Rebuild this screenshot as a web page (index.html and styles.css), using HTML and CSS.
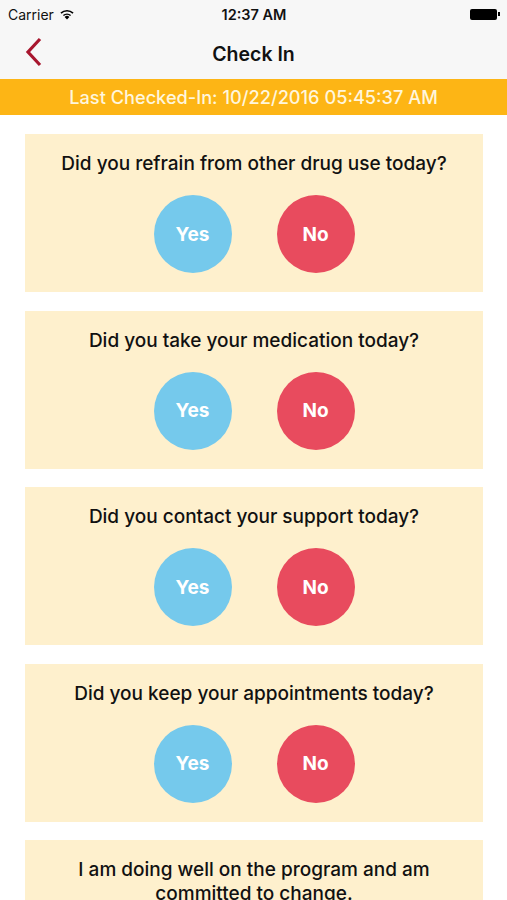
FILE: index.html
```html
<!DOCTYPE html>
<html lang="en">
<head>
  <meta charset="UTF-8">
  <title>Check In</title>
  <link rel="stylesheet" href="styles.css">
</head>
<body>

<div class="status-bar">
  <div class="carrier">Carrier
    <svg class="wifi" width="16" height="12" viewBox="0 0 16 12">
      <path d="M8 11.5 L5.6 8.9 A3.5 3.5 0 0 1 10.4 8.9 Z" fill="#000"/>
      <path d="M3.9 7.1 A6 6 0 0 1 12.1 7.1 L11.1 8.1 A4.6 4.6 0 0 0 4.9 8.1 Z" fill="#000"/>
      <path d="M1.4 4.6 A9.5 9.5 0 0 1 14.6 4.6 L13.5 5.7 A8 8 0 0 0 2.5 5.7 Z" fill="#000"/>
    </svg>
  </div>
  <div class="clock">12:37 AM</div>
  <div class="battery"><span class="battery-body"></span><span class="battery-tip"></span></div>
</div>

<header class="nav-bar">
  <svg class="back" width="18" height="30" viewBox="0 0 18 30">
    <path d="M15 2 L3 15 L15 28" fill="none" stroke="#a8162e" stroke-width="3.2"/>
  </svg>
  <h1>Check In</h1>
</header>

<div class="banner">Last Checked-In: 10/22/2016 05:45:37 AM</div>

<main class="cards">
  <section class="card">
    <p class="question">Did you refrain from other drug use today?</p>
    <div class="answers">
      <button class="answer yes">Yes</button>
      <button class="answer no">No</button>
    </div>
  </section>
  <section class="card">
    <p class="question">Did you take your medication today?</p>
    <div class="answers">
      <button class="answer yes">Yes</button>
      <button class="answer no">No</button>
    </div>
  </section>
  <section class="card">
    <p class="question">Did you contact your support today?</p>
    <div class="answers">
      <button class="answer yes">Yes</button>
      <button class="answer no">No</button>
    </div>
  </section>
  <section class="card">
    <p class="question">Did you keep your appointments today?</p>
    <div class="answers">
      <button class="answer yes">Yes</button>
      <button class="answer no">No</button>
    </div>
  </section>
  <section class="card">
    <p class="question">I am doing well on the program and am<br>committed to change.</p>
    <div class="answers">
      <button class="answer yes">Yes</button>
      <button class="answer no">No</button>
    </div>
  </section>
</main>

</body>
</html>
```

FILE: styles.css
```css
* {
  box-sizing: border-box;
}
body {
  margin: 0;
  background-color: #ffffff;
  font-family: 'Inter', 'Roboto', sans-serif;
  color: #111;
  width: 507px;
  height: 900px;
  overflow: hidden;
}
.status-bar {
  height: 28px;
  background-color: #f7f7f7;
  display: flex;
  align-items: center;
  justify-content: space-between;
  padding: 0 7px 0 8px;
  font-size: 14px;
}
.carrier {
  flex: 1;
  display: flex;
  align-items: center;
  gap: 5px;
}
.clock {
  font-weight: 600;
  font-size: 14.5px;
}
.battery {
  flex: 1;
  display: flex;
  justify-content: flex-end;
  align-items: center;
}
.battery-body {
  width: 27px;
  height: 11px;
  background-color: #000;
  border-radius: 2px;
}
.battery-tip {
  width: 2px;
  height: 4px;
  background-color: #000;
  margin-left: 1px;
}
.nav-bar {
  height: 51px;
  background-color: #f7f7f7;
  display: flex;
  align-items: center;
  justify-content: center;
  position: relative;
}
.nav-bar h1 {
  margin: 0;
  font-size: 19.5px;
  font-weight: 600;
}
.back {
  position: absolute;
  left: 25px;
  top: 9px;
}
.banner {
  height: 36px;
  background-color: #fdb515;
  color: #fff6dc;
  font-size: 18.2px;
  font-weight: 500;
  display: flex;
  align-items: center;
  justify-content: center;
}
.cards {
  padding: 19px 24px 0 25px;
  display: flex;
  flex-direction: column;
  gap: 18.5px;
}
.card {
  background-color: #fef0cd;
  height: 158px;
  padding: 18px 6px 0;
  flex-shrink: 0;
}
.question {
  margin: 0;
  text-align: center;
  font-size: 19px;
  line-height: 24px;
  font-weight: 500;
}
.answers {
  display: flex;
  justify-content: center;
  gap: 45px;
  margin-top: 19px;
}
.answer {
  width: 78px;
  height: 78px;
  border-radius: 50%;
  border: none;
  color: #fff;
  font-family: inherit;
  font-size: 19px;
  font-weight: 700;
  padding: 0;
}
.yes {
  background-color: #75c9ec;
}
.no {
  background-color: #e84b5e;
}
```
